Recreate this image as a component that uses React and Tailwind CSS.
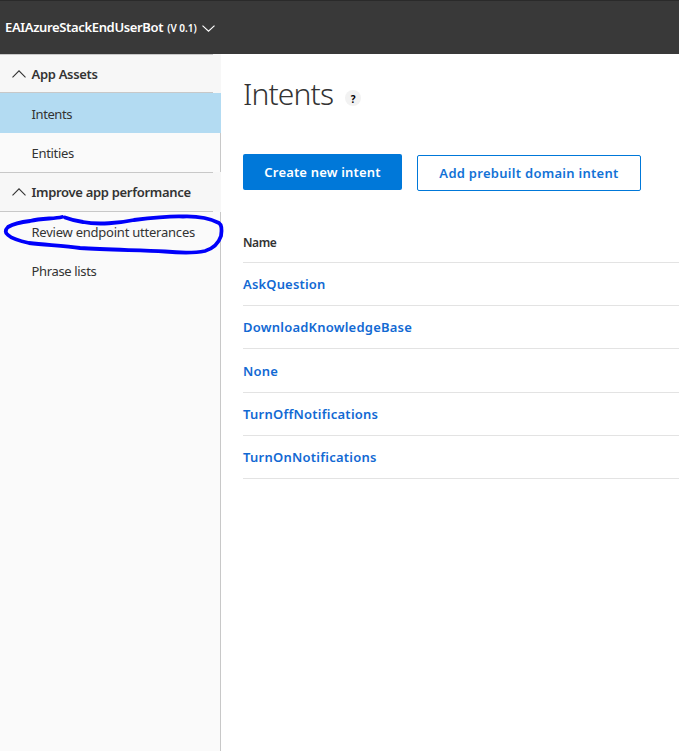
const intents = [
  { name: "AskQuestion", cls: "h-[43px] tracking-[0.16px]" },
  { name: "DownloadKnowledgeBase", cls: "h-[43px] tracking-[0.22px]" },
  { name: "None", cls: "h-[44px] tracking-[0.25px]" },
  { name: "TurnOffNotifications", cls: "h-[43px] tracking-[0.24px]" },
  { name: "TurnOnNotifications", cls: "h-[43px] tracking-[0.24px]" },
];

function Section({ title, cls }) {
  return (
    <div className={`bg-[#f7f7f7] pr-2 ${cls}`}>
      <div className="flex h-full items-center border-y border-[#c8c8c8] pl-3">
        <svg className="mr-[6px] h-[8px] w-[14px] shrink-0" viewBox="0 0 14 8" fill="none" stroke="#333" strokeWidth="1.1">
          <path d="M0.5 7.3 7 0.8l6.5 6.5" />
        </svg>
        <span className="-ml-[0.5px] pt-[2px] whitespace-nowrap text-[13px] font-semibold tracking-[-0.31px] text-[#333]">{title}</span>
      </div>
    </div>
  );
}

function Item({ label, cls }) {
  return (
    <div className={`flex items-center pl-[31.5px] text-[13px] text-[#333] whitespace-nowrap ${cls}`}>
      {label}
    </div>
  );
}

export default function App() {
  return (
    <div className="relative flex h-[751px] w-[679px] flex-col overflow-hidden bg-white font-['Noto_Sans','Open_Sans',sans-serif]">
      <header className="flex h-[54px] shrink-0 items-center border-t border-[#2a2a2a] bg-[#393939] pt-px pl-[5px] text-white whitespace-nowrap">
        <span className="text-[13px] font-semibold tracking-[-0.35px]">EAIAzureStackEndUserBot</span>
        <span className="ml-[4px] pt-px text-[10px] font-semibold">(V 0.1)</span>
        <svg className="ml-[5px] h-[7px] w-[13px]" viewBox="0 0 13 7" fill="none" stroke="#fff" strokeWidth="1.2">
          <path d="M0.5 0.6 6.500 6.1l6-5.5" />
        </svg>
      </header>
      <div className="flex min-h-0 flex-1">
        <aside className="flex w-[221px] shrink-0 flex-col bg-[#fafafa]">
          <Section title="App Assets" cls="h-[39px]" />
          <Item label="Intents" cls="h-[40px] bg-[#b3dbf2] pt-[3px] tracking-[-0.4px]" />
          <Item label="Entities" cls="h-[39px] border-r border-[#c8c8c8] pt-[2px] tracking-[-0.3px]" />
          <Section title="Improve app performance" cls="h-[40px]" />
          <div className="flex-1 border-r border-[#c8c8c8]">
            <Item label="Review endpoint utterances" cls="h-[40px] pt-[2px] tracking-[-0.23px]" />
            <Item label="Phrase lists" cls="h-[39px] tracking-[-0.35px]" />
          </div>
        </aside>
        <main className="min-w-0 flex-1 pl-[22px]">
          <div className="flex h-[100px] items-start pt-[18px]">
            <h1 className="text-[30px] leading-[44px] font-light tracking-[-0.85px] text-[#333]">Intents</h1>
            <span className="mt-[18px] ml-[12px] flex h-4 w-4 items-center justify-center rounded-full bg-[#f2f2f2] pt-[2px] text-[10px] font-bold text-black">?</span>
          </div>
          <div className="flex text-[13px] font-semibold whitespace-nowrap">
            <button className="flex h-[36px] w-[159px] items-center justify-center rounded-[2px] bg-[#0078d9] pt-px text-white tracking-[0.17px]">Create new intent</button>
            <button className="mt-px ml-[15px] flex h-[36px] w-[224px] items-center justify-center rounded-[2px] border border-[#0078d9] pt-px text-[#1272d6] tracking-[0.28px]">Add prebuilt domain intent</button>
          </div>
          <div className="mt-[32px] flex h-[40px] items-center border-b border-[#e3e3e3] pt-px text-[12px] font-semibold tracking-[-0.4px] text-[#333]">Name</div>
          {intents.map((i) => (
            <div key={i.name} className={`flex items-center border-b border-[#e3e3e3] pt-[2px] text-[13px] font-semibold text-[#1269d3] ${i.cls}`}>
              {i.name}
            </div>
          ))}
        </main>
      </div>
      <svg className="absolute top-[205px] left-0 h-[60px] w-[230px]" viewBox="0 205 230 60" fill="none" stroke="#0000fa" strokeWidth="3.8" strokeLinejoin="round" strokeLinecap="round">
        <path d="M62 217C54 219 42 218 30 221C21 222 13 224 8 227C5 230 5 233 8 235C12 239 20 241 29 243C48 245 65 246 80 248C108 250 140 250 165 251.500C182 253 195 253 205 251C215 248 219 242 221 236C222 230 222 225 219 223C209 218 198 216 183 216.500C166 216 150 218 134 220C120 223 98 225 83 222C75 221 69 219 65 217.500" />
      </svg>
    </div>
  );
}
